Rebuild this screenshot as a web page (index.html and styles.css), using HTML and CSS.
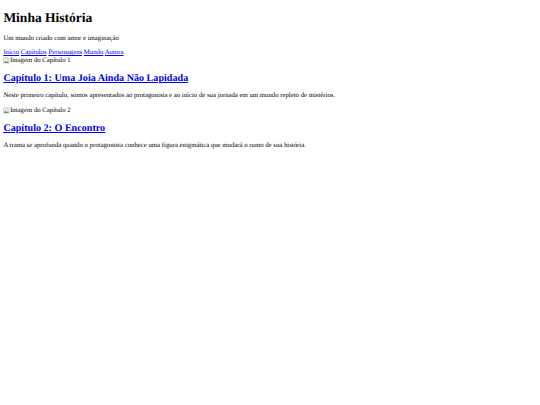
FILE: index.html
```html
<!DOCTYPE html>
<html lang="pt">
<head>
<meta charset="utf-8">
<title>Minha História</title>
<link rel="stylesheet" href="styles.css">
</head>
<body>
<header class="site-header">
  <h1 class="site-title">Minha História</h1>
  <p class="tagline">Um mundo criado com amor e imaginação</p>
</header>
<nav class="site-nav">
  <a href="#">Início</a> <a href="#">Capítulos</a> <a href="#">Personagens</a> <a href="#">Mundo</a> <a href="#">Autora</a>
</nav>
<main>
  <section class="chapter">
    <div class="img-alt"><svg class="broken" viewBox="0 0 16 16"><path d="M1.5 1.5h10l3 3v10h-13z" fill="#e8f0f8" stroke="#9a9a9a"/><path d="M2 14l4-5 3 3 2-2 3 4z" fill="#5aa04a"/><circle cx="10" cy="5.5" r="1.4" fill="#f0c040"/></svg>Imagem do Capítulo 1</div>
    <h2 class="chapter-title"><a href="#">Capítulo 1: Uma Joia Ainda Não Lapidada</a></h2>
    <p class="chapter-text">Neste primeiro capítulo, somos apresentados ao protagonista e ao início de sua jornada em um mundo repleto de mistérios.</p>
  </section>
  <section class="chapter">
    <div class="img-alt"><svg class="broken" viewBox="0 0 16 16"><path d="M1.5 1.5h10l3 3v10h-13z" fill="#e8f0f8" stroke="#9a9a9a"/><path d="M2 14l4-5 3 3 2-2 3 4z" fill="#5aa04a"/><circle cx="10" cy="5.5" r="1.4" fill="#f0c040"/></svg>Imagem do Capítulo 2</div>
    <h2 class="chapter-title"><a href="#">Capítulo 2: O Encontro</a></h2>
    <p class="chapter-text">A trama se aprofunda quando o protagonista conhece uma figura enigmática que mudará o rumo de sua história.</p>
  </section>
</main>
</body>
</html>
```
FILE: styles.css
```css
html { background: #fff; }
body {
  margin: 3.375px;
  font-family: "Liberation Serif", "Times New Roman", serif;
  font-size: 6.75px;
  color: #000;
  text-rendering: geometricPrecision;
}
a { color: #0000ee; }
.site-title {
  font-size: 13.5px;
  font-weight: bold;
  margin: 7px 0 9.045px;
}
.tagline { margin: 6.75px 0; }
.site-nav { display: block; }
.img-alt {
  height: 8.44px;
  display: flex;
  align-items: center;
}
.broken { flex: none; width: 6.75px; height: 6.75px; }
.chapter-title {
  font-size: 10.125px;
  font-weight: bold;
  margin: 8.404px 0;
}
.chapter-text { margin: 6.75px 0; }
```
